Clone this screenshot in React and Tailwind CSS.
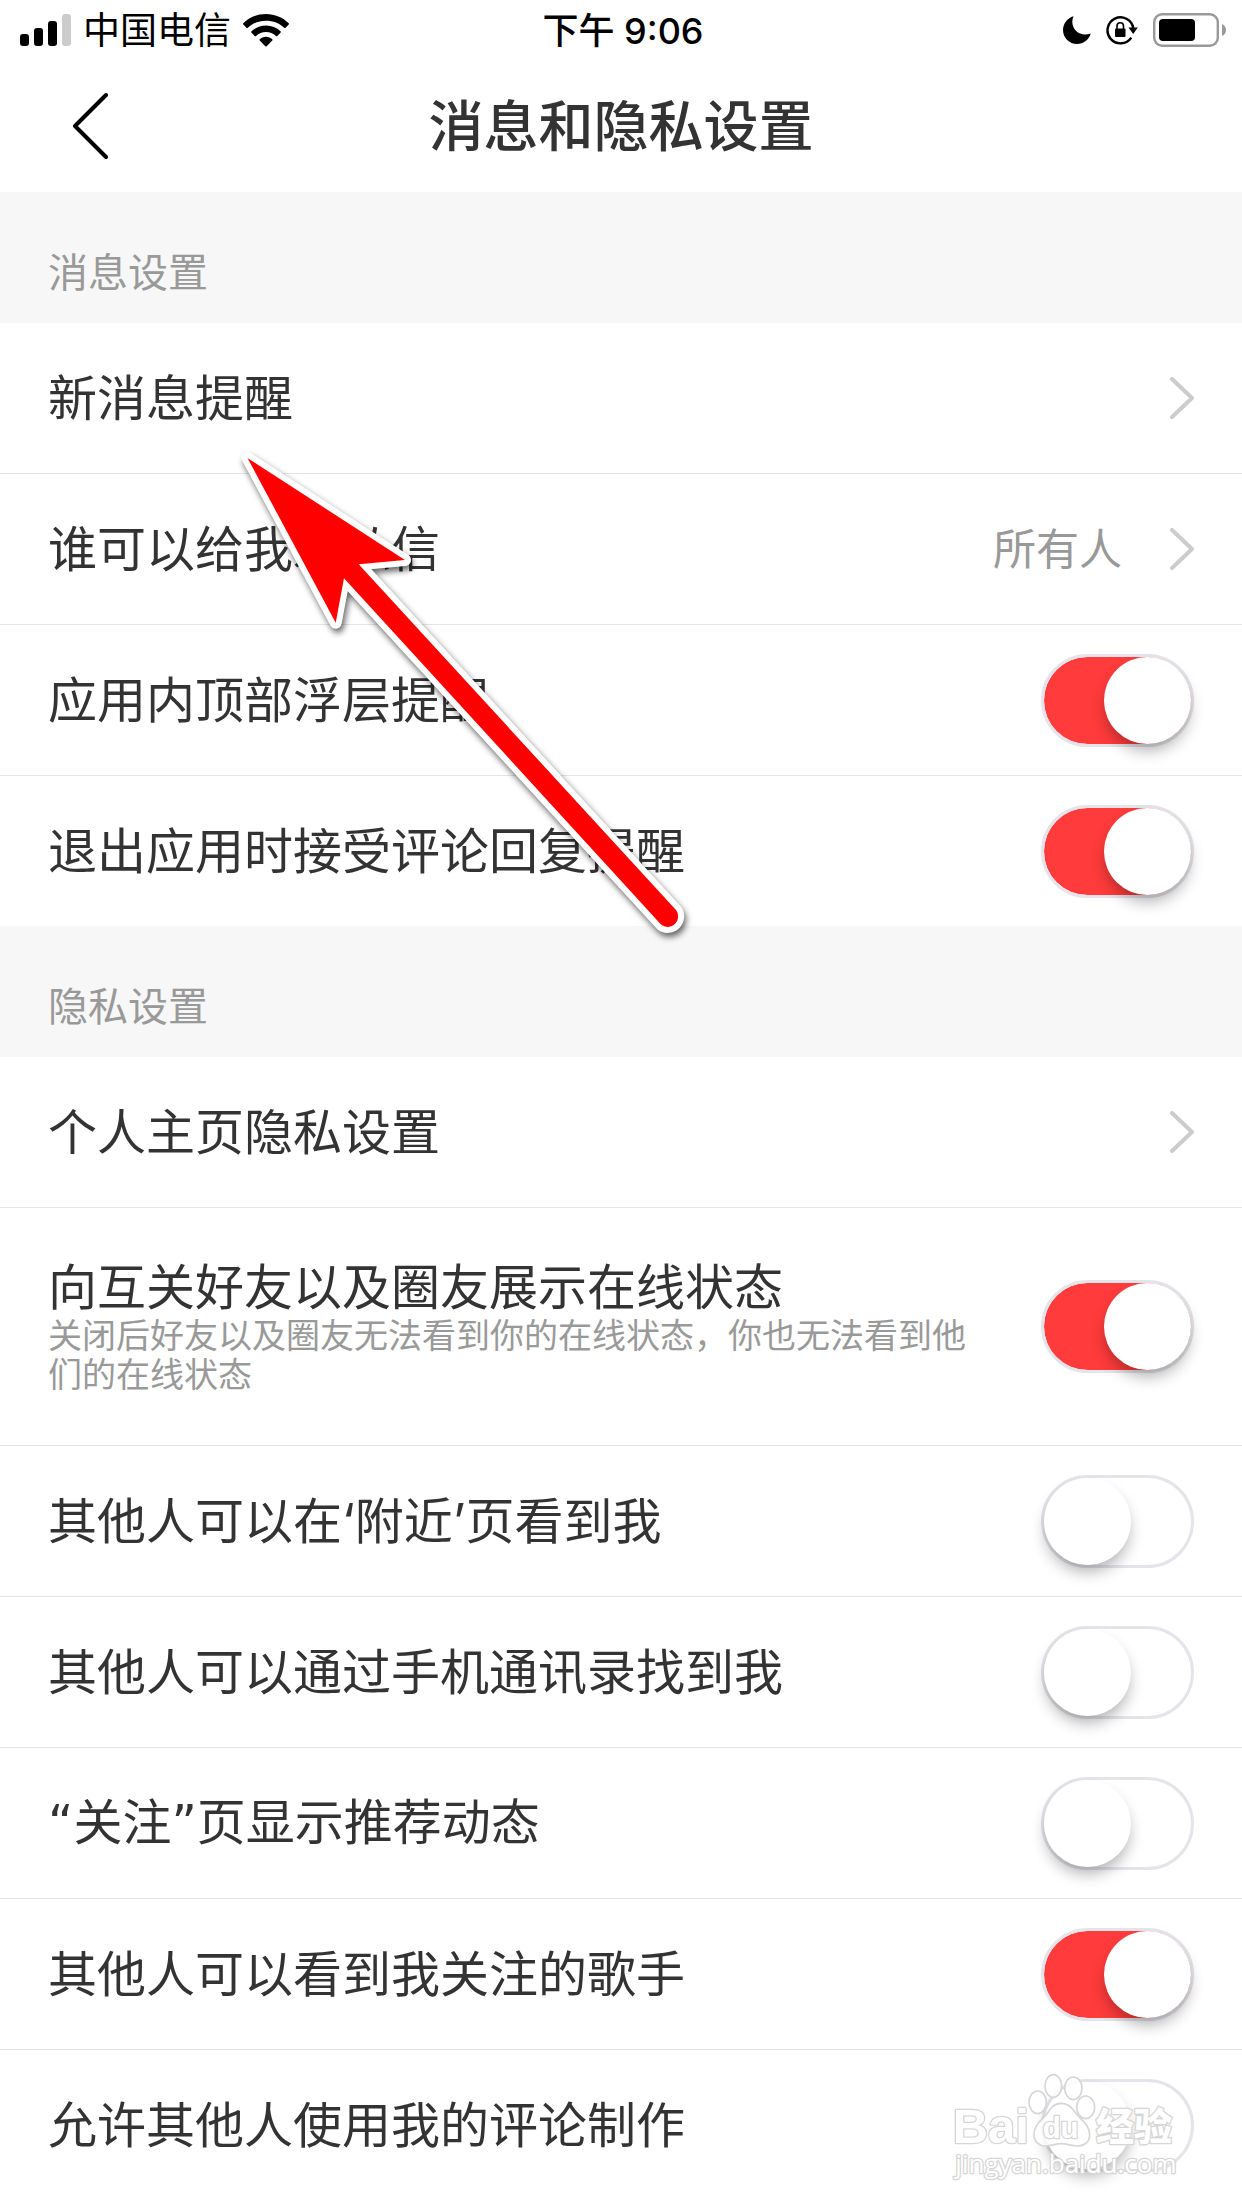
import React, { useState } from "react";

// Wide curly quote, the default one is too narrow next to the characters
const Quote = ({ children }) => <span className="font-['DejaVu_Sans',sans-serif]">{children}</span>;

const messageSettings = [
  { id: "new-message", label: "新消息提醒", type: "link" },
  { id: "private-message", label: "谁可以给我发私信", type: "link", value: "所有人" },
  { id: "top-banner", label: "应用内顶部浮层提醒", type: "switch", on: true },
  { id: "comment-reply", label: "退出应用时接受评论回复提醒", type: "switch", on: true },
];

const privacySettings = [
  { id: "homepage", label: "个人主页隐私设置", type: "link" },
  {
    id: "online-status",
    label: "向互关好友以及圈友展示在线状态",
    description: "关闭后好友以及圈友无法看到你的在线状态，你也无法看到他们的在线状态",
    type: "switch",
    on: true,
  },
  { id: "nearby", label: "其他人可以在‘附近’页看到我", type: "switch", on: false },
  { id: "contacts", label: "其他人可以通过手机通讯录找到我", type: "switch", on: false },
  {
    id: "follow-feed",
    label: <><Quote>“</Quote>关注<Quote>”</Quote>页显示推荐动态</>,
    type: "switch",
    on: false,
  },
  { id: "followed-artists", label: "其他人可以看到我关注的歌手", type: "switch", on: true },
  { id: "comment-making", label: "允许其他人使用我的评论制作", type: "switch", on: false },
];

const SignalIcon = () => (
  <svg className="h-8 w-[51px]" viewBox="0 0 51 32">
    <rect x="0" y="20" width="9" height="12" rx="3" />
    <rect x="14" y="14" width="9" height="18" rx="3" />
    <rect x="28" y="7" width="9" height="25" rx="3" />
    <rect x="42" y="0" width="9" height="32" rx="3" fill="#cccccc" />
  </svg>
);

const WifiIcon = () => (
  <svg className="h-[33px] w-[46px]" viewBox="0 0 46 33">
    <path d="M23 0C14.2 0 6.200 3.500.3 9.200c-.4.400-.4 1 0 1.400l3.100 3.200c.4.400 1 .4 1.400 0C9.500 9.300 15.900 6.700 23 6.700s13.500 2.600 18.200 7.100c.4.400 1 .4 1.400 0l3.100-3.200c.4-.4.4-1 0-1.400C39.800 3.500 31.800 0 23 0z" />
    <path d="M23 11.500c-5.600 0-10.700 2.200-14.500 5.800-.4.400-.4 1 0 1.400l3.200 3.200c.4.400 1 .4 1.400 0 2.600-2.400 6.100-3.900 9.900-3.900s7.300 1.500 9.900 3.900c.4.400 1 .4 1.400 0l3.200-3.200c.4-.4.4-1 0-1.400-3.800-3.600-8.900-5.800-14.500-5.800z" />
    <path d="M23 22.800c-2.400 0-4.600.9-6.300 2.400-.4.400-.4 1 0 1.400l5.600 5.700c.4.400 1 .4 1.400 0l5.600-5.700c.4-.4.4-1 0-1.400-1.700-1.500-3.900-2.400-6.300-2.400z" />
  </svg>
);

const MoonIcon = () => (
  <svg className="h-7 w-7" viewBox="0 0 28 28">
    <path d="M10.500.2C9.700 2 9.300 3.800 9.300 5.800c0 7.200 5.700 12.800 12.800 12.800 2 0 3.900-.4 5.700-1.100C26 23.600 20.500 28 14 28 6.300 28 0 21.700 0 14 0 7.600 4.400 2 10.500.2z" />
  </svg>
);

const RotationLockIcon = () => (
  <svg className="h-[30px] w-8" viewBox="0 0 32 30">
    <path d="M25.300 22.600A13 13 0 1 1 27.300 13" fill="none" stroke="#000" strokeWidth="2.400" />
    <path d="M22.500 12.500h9.300l-4.600 6.600z" />
    <rect x="9" y="13.500" width="10.500" height="8.500" rx="1" />
    <path d="M11 14v-3a3.200 3.200 0 0 1 6.500 0v3" fill="none" stroke="#000" strokeWidth="1.600" />
  </svg>
);

const BatteryIcon = () => (
  <svg className="h-[34px] w-[73px]" viewBox="0 0 73 34">
    <rect x="1.200" y="1.200" width="63.600" height="31.600" rx="8" fill="none" stroke="#999999" strokeWidth="2.400" />
    <rect x="6" y="6" width="36" height="22" rx="4" />
    <path d="M69 11c2.500.8 4 3.200 4 6s-1.500 5.200-4 6z" fill="#999999" />
  </svg>
);

const ChevronRight = () => (
  <svg className="h-[42px] w-6 shrink-0" viewBox="0 0 24 42" fill="none" stroke="#cccccc" strokeWidth="4" strokeLinecap="round" strokeLinejoin="round">
    <path d="M2 2l20 19L2 40" />
  </svg>
);

const StatusBar = () => (
  <div className="grid h-[60px] grid-cols-3 items-center pl-5 pr-4 text-black">
    <div className="flex items-center gap-3">
      <SignalIcon />
      <span className="pt-[2px] text-[37px] leading-[40px]">中国电信</span>
      <WifiIcon />
    </div>
    <div className="pt-[2px] text-center text-[36px] font-medium leading-[40px]">下午 9:06</div>
    <div className="flex items-center justify-end gap-[15px]">
      <MoonIcon />
      <RotationLockIcon />
      <BatteryIcon />
    </div>
  </div>
);

const Header = () => (
  <header className="grid h-[132px] grid-cols-[160px_1fr_160px] items-center">
    <button type="button" aria-label="返回" className="flex h-full items-center pl-[72px]">
      <svg className="h-[68px] w-9" viewBox="0 0 36 68" fill="none" stroke="#000" strokeWidth="4" strokeLinecap="round" strokeLinejoin="round">
        <path d="M34 3L3 34l31 31" />
      </svg>
    </button>
    <h1 className="text-center text-[55px] font-medium leading-[60px]">消息和隐私设置</h1>
  </header>
);

const Switch = ({ id, checked, onChange }) => (
  <input
    id={id}
    type="checkbox"
    role="switch"
    checked={checked}
    onChange={onChange}
    className="h-[93px] w-[153px] shrink-0 cursor-pointer appearance-none rounded-full border-[3px] border-[#e4e4ea] bg-white bg-clip-padding before:block before:size-[87px] before:rounded-full before:bg-white before:shadow-[0_9px_15px_-2px_rgba(0,0,0,0.3)] before:content-[''] checked:bg-[#ff3b3b] checked:before:translate-x-[60px]"
  />
);

const SettingRow = ({ item, checked, onToggle }) => {
  if (item.type === "link") {
    return (
      <button type="button" className="flex min-h-[150px] w-full items-center justify-between px-12 text-left">
        <span className="text-[49px] leading-[57px]">{item.label}</span>
        <span className="flex items-center gap-12">
          {item.value && <span className="text-[43px] leading-[57px] text-[#999999]">{item.value}</span>}
          <ChevronRight />
        </span>
      </button>
    );
  }

  return (
    <div className={`flex min-h-[150px] items-center justify-between gap-12 px-12 ${item.description ? "py-[51px]" : ""}`}>
      <label htmlFor={item.id} className="block">
        <span className="block text-[49px] leading-[57px]">{item.label}</span>
        {item.description && (
          <span className="block text-[34px] leading-[39px] text-[#999999]">{item.description}</span>
        )}
      </label>
      <Switch id={item.id} checked={checked} onChange={() => onToggle(item.id)} />
    </div>
  );
};

const SettingSection = ({ title, items, values, onToggle }) => (
  <section>
    <h2 className="bg-[#f7f7f7] px-12 pb-[30px] pt-[61px] text-[40px] leading-[40px] text-[#999999]">{title}</h2>
    <ul>
      {items.map((item) => (
        <li key={item.id} className="border-b border-[#e5e5e5] last:border-b-0">
          <SettingRow item={item} checked={values[item.id]} onToggle={onToggle} />
        </li>
      ))}
    </ul>
  </section>
);

// Red arrow pointing at the first row
const PointerArrow = () => (
  <svg className="pointer-events-none absolute left-[230px] top-[440px] h-[520px] w-[480px]" viewBox="230 440 480 520">
    <g style={{ filter: "drop-shadow(2px 4px 3px rgba(0,0,0,0.6))" }}>
      <path
        d="M247.500 458L405 560L358.700 564.300L676 910A10.500 10.500 0 0 1 661 924.500L344 578.300L335.700 622.700Z"
        fill="#ff0000"
        stroke="#ffffff"
        strokeWidth="12"
        strokeLinejoin="round"
        paintOrder="stroke"
      />
    </g>
  </svg>
);

const Watermark = () => (
  <svg
    className="pointer-events-none absolute right-[62px] top-[2070px] h-[117px] w-[230px]"
    viewBox="90 90 690 351"
    fill="#ffffff"
    stroke="#d6d6d6"
    strokeWidth="8"
    strokeLinejoin="round"
  >
    <text x="98" y="309" fontSize="147" className="font-['Liberation_Sans'] font-bold" paintOrder="stroke">Bai</text>
    <g strokeWidth="5" fillOpacity="0.85">
      <ellipse cx="400" cy="138" rx="25" ry="34" />
      <ellipse cx="460" cy="145" rx="26" ry="34" />
      <ellipse cx="353" cy="187" rx="26" ry="34" />
      <ellipse cx="497" cy="202" rx="27" ry="34" />
      <path d="M424 190c22 0 34 14 44 30s41 32 41 64c0 24-18 34-38 34-16 0-28-7-47-7s-30 7-46 7c-20 0-36-12-36-36 0-30 30-46 40-62s20-30 42-30z" />
    </g>
    <text x="368" y="293" fontSize="88" className="font-['Liberation_Sans'] font-bold" paintOrder="stroke">du</text>
    <text x="528" y="300" fontSize="114" className="font-['Noto_Sans_CJK_SC'] font-black" paintOrder="stroke">经验</text>
    <text x="106" y="399" fontSize="78" className="font-['Open_Sans']" paintOrder="stroke">jingyan.baidu.com</text>
  </svg>
);

const initialValues = Object.fromEntries(
  [...messageSettings, ...privacySettings].filter((item) => item.type === "switch").map((item) => [item.id, item.on])
);

const App = () => {
  const [values, setValues] = useState(initialValues);

  const handleToggle = (id) => {
    setValues((prev) => ({ ...prev, [id]: !prev[id] }));
  };

  return (
    <div lang="zh-CN" className="relative min-h-screen overflow-hidden bg-white font-['Inter','Noto_Sans_CJK_SC',sans-serif] text-[#333333]">
      <StatusBar />
      <Header />
      <main>
        <SettingSection title="消息设置" items={messageSettings} values={values} onToggle={handleToggle} />
        <SettingSection title="隐私设置" items={privacySettings} values={values} onToggle={handleToggle} />
      </main>
      <PointerArrow />
      <Watermark />
    </div>
  );
};

export default App;
